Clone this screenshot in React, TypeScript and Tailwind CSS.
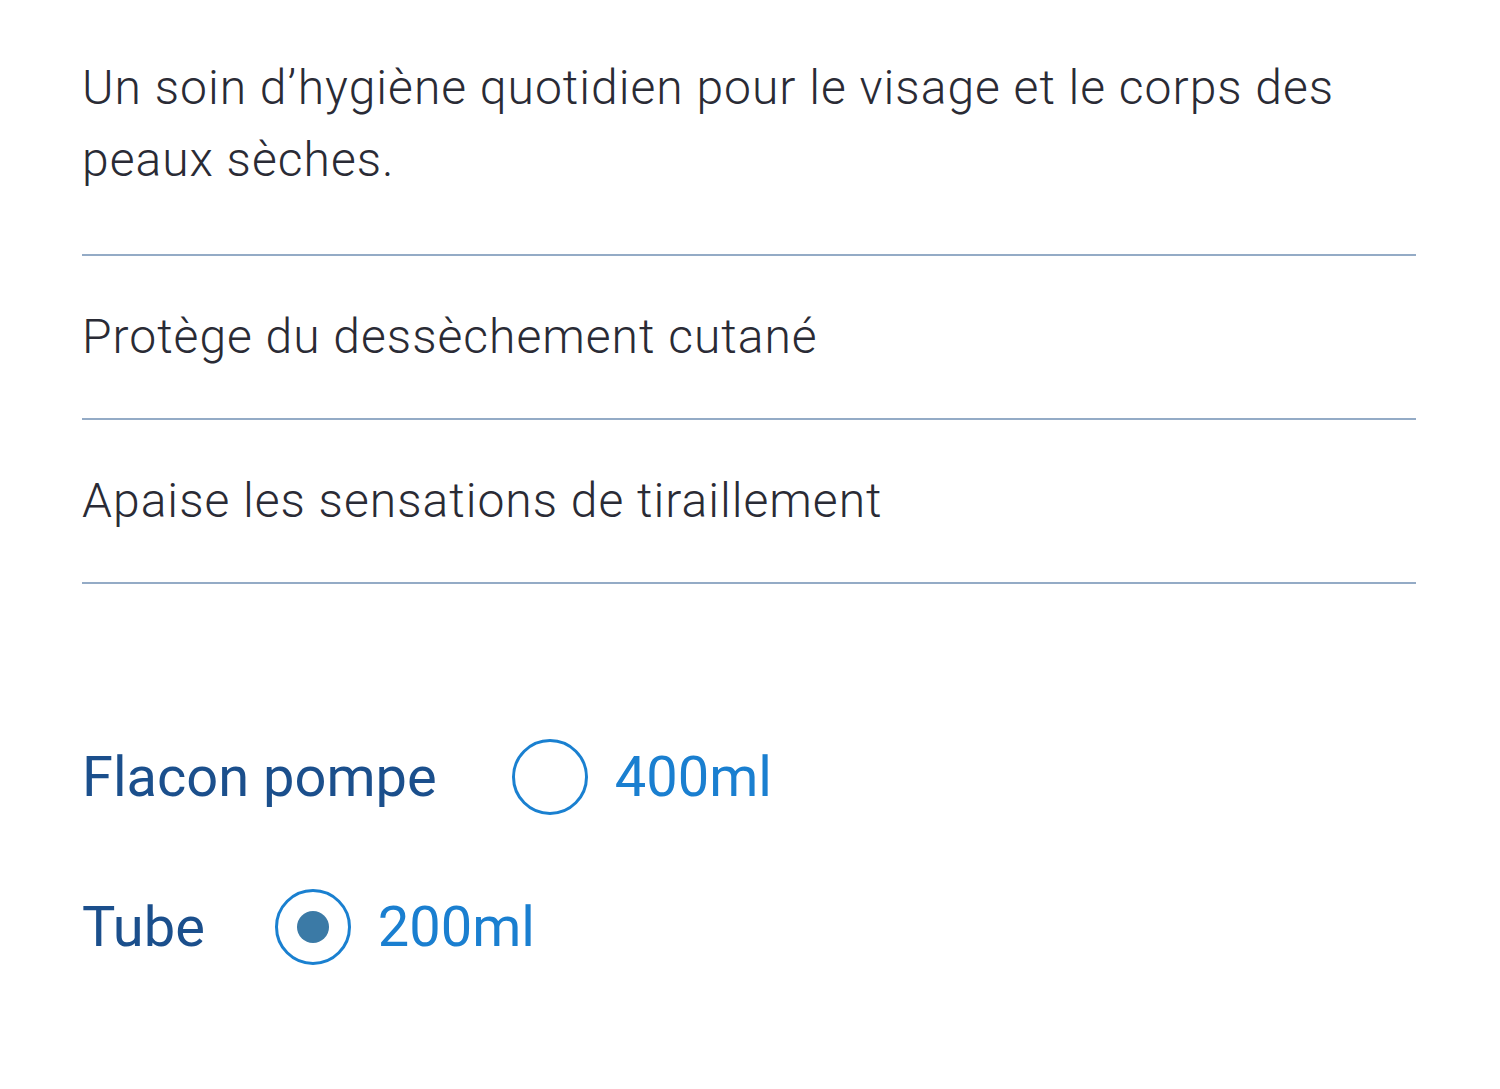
import React from "react";

function Radio({ checked }: { checked?: boolean }) {
  return (
    <span className="flex h-[76px] w-[76px] shrink-0 items-center justify-center rounded-full border-[3px] border-[#1a80d0]">
      {checked && <span className="h-[32px] w-[32px] rounded-full bg-[#3b7aa6]" />}
    </span>
  );
}

export default function App() {
  const items = ["Protège du dessèchement cutané", "Apaise les sensations de tiraillement"];
  return (
    <div className="min-h-[1089px] w-[1500px] bg-white" style={{ fontFamily: "Roboto, 'Noto Sans', sans-serif" }}>
      <div className="px-[82px] pt-[52px]">
        <p className="w-[1290px] text-[48px] font-light leading-[72px] tracking-[1px] text-[#2a2b35]">
          Un soin d’hygiène quotidien pour le visage et le corps des peaux sèches.
        </p>
        <div className="mt-[58px] w-[1334px] border-t-2 border-[#94abc6]">
          {items.map((t) => (
            <div key={t} className="border-b-2 border-[#94abc6] py-[45px] text-[48px] font-light leading-[72px] tracking-[1px] text-[#2a2b35]">
              {t}
            </div>
          ))}
        </div>
        <div className="mt-[155px] flex flex-col gap-[74px]">
          <div className="flex items-center">
            <span className="text-[56px] leading-[76px] text-[#1b4f8c]">Flacon pompe</span>
            <span className="ml-[75px]"><Radio /></span>
            <span className="ml-[27px] text-[56px] leading-[76px] text-[#1a7fd0]">400ml</span>
          </div>
          <div className="flex items-center">
            <span className="text-[56px] leading-[76px] text-[#1b4f8c]">Tube</span>
            <span className="ml-[70px]"><Radio checked /></span>
            <span className="ml-[27px] text-[56px] leading-[76px] text-[#1a7fd0]">200ml</span>
          </div>
        </div>
      </div>
    </div>
  );
}
